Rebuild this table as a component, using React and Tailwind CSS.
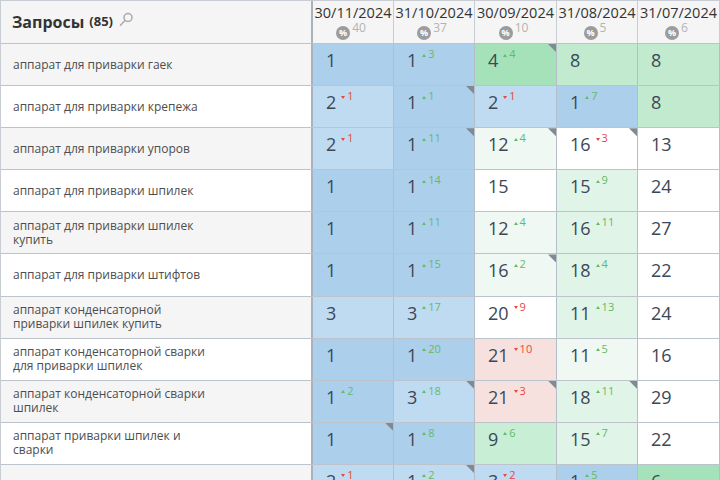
import React from 'react';

const BG = {
  B: 'bg-[#acd0ec]',
  b: 'bg-[#bfdbf1]',
  G: 'bg-[#a6e2b9]',
  g: 'bg-[#c1eacf]',
  h: 'bg-[#c8eed5]',
  l: 'bg-[#e1f4e8]',
  v: 'bg-[#eff8f2]',
  p: 'bg-[#f7e1df]',
  w: 'bg-white',
};

const DATES = [
  { date: '30/11/2024', count: 40 },
  { date: '31/10/2024', count: 37 },
  { date: '30/09/2024', count: 10 },
  { date: '31/08/2024', count: 5 },
  { date: '31/07/2024', count: 6 },
];

const WIDTHS = ['w-[81px]', 'w-[81px]', 'w-[82px]', 'w-[81px]', 'flex-1'];

// [value, delta, colour, corner]
const ROWS = [
  {
    label: ['аппарат для приварки гаек'],
    cells: [[1, 0, 'B'], [1, 3, 'B'], [4, 4, 'G', true], [8, 0, 'g'], [8, 0, 'g']],
  },
  {
    label: ['аппарат для приварки крепежа'],
    cells: [[2, -1, 'b'], [1, 1, 'B', true], [2, -1, 'b'], [1, 7, 'B'], [8, 0, 'g']],
  },
  {
    label: ['аппарат для приварки упоров'],
    cells: [[2, -1, 'b'], [1, 11, 'B', true], [12, 4, 'v', true], [16, -3, 'w', true], [13, 0, 'w']],
  },
  {
    label: ['аппарат для приварки шпилек'],
    cells: [[1, 0, 'B'], [1, 14, 'B'], [15, 0, 'w'], [15, 9, 'l'], [24, 0, 'w']],
  },
  {
    label: ['аппарат для приварки шпилек', 'купить'],
    cells: [[1, 0, 'B'], [1, 11, 'B'], [12, 4, 'v'], [16, 11, 'l'], [27, 0, 'w']],
  },
  {
    label: ['аппарат для приварки штифтов'],
    cells: [[1, 0, 'B'], [1, 15, 'B'], [16, 2, 'v', true], [18, 4, 'l'], [22, 0, 'w']],
  },
  {
    label: ['аппарат конденсаторной', 'приварки шпилек купить'],
    cells: [[3, 0, 'b'], [3, 17, 'b'], [20, -9, 'w'], [11, 13, 'l'], [24, 0, 'w']],
  },
  {
    label: ['аппарат конденсаторной сварки', 'для приварки шпилек'],
    cells: [[1, 0, 'B'], [1, 20, 'B'], [21, -10, 'p'], [11, 5, 'v'], [16, 0, 'w']],
  },
  {
    label: ['аппарат конденсаторной сварки', 'шпилек'],
    cells: [[1, 2, 'B'], [3, 18, 'b', true], [21, -3, 'p', true], [18, 11, 'l', true], [29, 0, 'w']],
  },
  {
    label: ['аппарат приварки шпилек и', 'сварки'],
    cells: [[1, 0, 'B', true], [1, 8, 'B'], [9, 6, 'h'], [15, 7, 'l'], [22, 0, 'w']],
  },
  {
    label: [''],
    cells: [[2, -1, 'b'], [1, 2, 'b', true], [3, -2, 'b'], [1, 5, 'B'], [6, 0, 'G']],
  },
];

function Delta({ d }) {
  const up = d > 0;
  return (
    <span
      className={`ml-[5px] flex items-center text-[11px] leading-[12px] ${
        up ? 'text-[#62bb66]' : 'text-[#e8453c]'
      }`}
    >
      <svg width="4" height="3" viewBox="0 0 4 3" className="mr-[2px] mt-[2px]">
        {up ? <path d="M0 3 L2 0 L4 3 Z" fill="currentColor" /> : <path d="M0 0 L4 0 L2 3 Z" fill="currentColor" />}
      </svg>
      {Math.abs(d)}
    </span>
  );
}

function Cell({ cell, width }) {
  const [value, delta, color, corner] = cell;
  return (
    <div className={`relative ${width} h-full border-r border-[#b5bec8] ${BG[color]} pl-[13px] pt-[4px]`}>
      <div className="flex items-start">
        <span className="text-[18px] leading-[24px] text-[#3b4858]">{value}</span>
        {delta !== 0 && <Delta d={delta} />}
      </div>
      {corner && (
        <div className="absolute top-0 right-0 w-[8px] h-[8px] bg-[#7f8a95] [clip-path:polygon(0_0,100%_0,100%_100%)]" />
      )}
    </div>
  );
}

function SearchIcon() {
  return (
    <svg width="15" height="15" viewBox="0 0 15 15" fill="none" stroke="#a9a9a9" strokeWidth="1.5">
      <circle cx="9" cy="5.5" r="4" />
      <path d="M6 8.6 L1.5 13.2" strokeLinecap="round" />
    </svg>
  );
}

export default function App() {
  return (
    <div className="w-[720px] h-[480px] overflow-hidden bg-white font-['Open_Sans',sans-serif]">
      <div className="border-t border-l border-[#c8cdd3]">
        {/* header */}
        <div className="flex h-[43px] border-b border-[#bcc3cb] bg-[#f5f5f5]">
          <div className="w-[312px] shrink-0 border-r-2 border-[#aab3bd] flex items-center pl-[11px]">
            <span className="text-[16px] font-bold text-[#333]">Запросы</span>
            <span className="ml-[5px] text-[13px] font-bold text-[#333]">(85)</span>
            <span className="ml-[6px] -mt-[5px]">
              <SearchIcon />
            </span>
          </div>
          {DATES.map((d, i) => (
            <div key={d.date} className={`${WIDTHS[i]} shrink-0 border-r border-[#c8cdd3] flex flex-col items-center pt-[3px]`}>
              <span className="text-[14.5px] leading-[18px] text-[#333] whitespace-nowrap">{d.date}</span>
              <div className="flex items-start mt-[4px] -ml-[4px]">
                <span className="w-[14px] h-[14px] rounded-full bg-[#9c9c9c] text-white text-[9px] font-bold leading-[14px] text-center">
                  %
                </span>
                <span className="ml-[2px] -mt-[5px] text-[12px] leading-[14px] text-[#b3b3b3]">{d.count}</span>
              </div>
            </div>
          ))}
        </div>

        {/* rows */}
        {ROWS.map((row, r) => (
          <div key={r} className="flex h-[42.1px] border-b border-[#bcc3cb]">
            <div
              className={`w-[312px] shrink-0 border-r-2 border-[#aab3bd] flex flex-col justify-center pl-[12px] text-[12px] leading-[14px] text-[#4d4d4d] ${
                r % 2 === 0 ? 'bg-[#f5f5f5]' : 'bg-white'
              }`}
            >
              {row.label.map((line, k) => (
                <span key={k}>{line}</span>
              ))}
            </div>
            {row.cells.map((c, i) => (
              <Cell key={i} cell={c} width={`${WIDTHS[i]} shrink-0`} />
            ))}
          </div>
        ))}
      </div>
    </div>
  );
}
